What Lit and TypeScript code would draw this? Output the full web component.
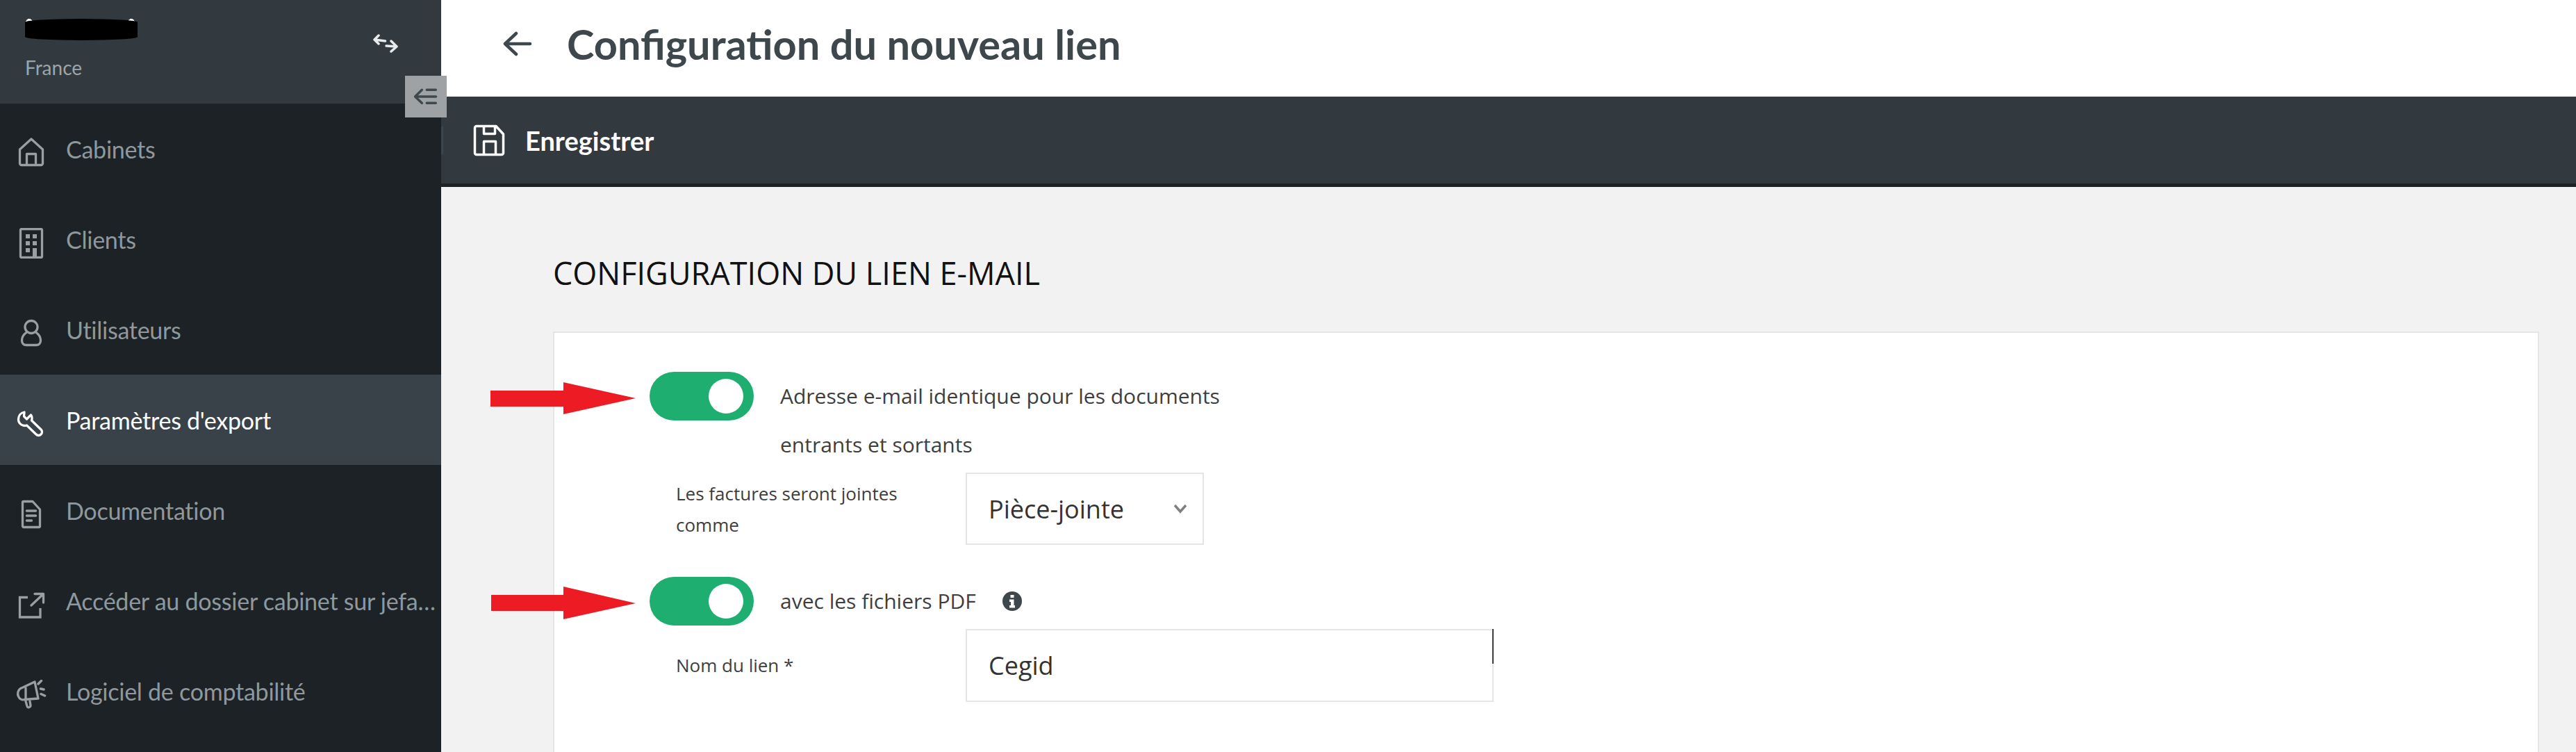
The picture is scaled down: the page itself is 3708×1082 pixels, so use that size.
import { LitElement, html, css, svg } from "lit";
import { customElement } from "lit/decorators.js";

const ic = (p: unknown) => html`<svg viewBox="0 0 44 44" fill="none" stroke="currentColor" stroke-width="3.300" stroke-linecap="round" stroke-linejoin="round">${p}</svg>`;

const NAV = [
  { label: "Cabinets", icon: ic(svg`<path d="M5.500 17 22 2 38.500 17V37a2.500 2.500 0 0 1-2.500 2.500H8A2.500 2.500 0 0 1 5.500 37Z"/><path d="M15.500 39V23.500h13V39"/>`) },
  { label: "Clients", icon: ic(svg`<rect x="6.500" y="1.500" width="31" height="41" rx="1.500"/><g fill="currentColor" stroke="none"><rect x="14" y="9" width="6" height="6"/><rect x="24" y="9" width="6" height="6"/><rect x="14" y="19" width="6" height="6"/><rect x="24" y="19" width="6" height="6"/><rect x="14" y="29" width="6" height="6"/><rect x="24" y="29" width="6" height="15"/></g>`) },
  { label: "Utilisateurs", icon: ic(svg`<circle cx="22" cy="12.500" r="9"/><path d="M15.500 20C11 23 8.500 27 8.500 32c0 4 2.500 6.500 6.500 6.500h14c4 0 6.500-2.500 6.500-6.500 0-5-2.500-9-7-12"/>`) },
  { label: "Paramètres d'export", active: true, icon: ic(svg`<path d="M12 5C6.500 6 3.500 10.500 3.500 15.500c0 6 6 10.500 12 8.500L29 37c2 2 5 2 7 0s2-5 0-7L22.500 17c1-3 .5-6-1-8l-6 6-4-4 .5-6Z"/>`) },
  { label: "Documentation", icon: ic(svg`<path d="M11 3.500H24L34.500 15V39a1.500 1.500 0 0 1-1.500 1.500H11A1.500 1.500 0 0 1 9.500 39V5A1.500 1.500 0 0 1 11 3.500Z"/><path stroke-width="3.500" d="M15.500 17h13M15.500 24h13M15.500 31h7"/>`) },
  { label: "Accéder au dossier cabinet sur jefacture.com", icon: ic(svg`<path stroke-linecap="butt" stroke-linejoin="miter" d="M17 11.500H5.500V40H35V27"/><path d="M22 23 39 7M27 6.500H39.500V19"/>`) },
  { label: "Logiciel de comptabilité", icon: ic(svg`<path d="M27 3 9 11.500C3 13 1.500 20 3.500 24c1.500 4 5.500 5.500 8.500 4.500L32 27Z"/><path d="M14 12v16M14 31l2 7c1 3 5 2 5-1l-1-6"/><path stroke-width="3.500" d="M32 6l4.500-4.500M35.500 13l4.500 1M36 20.500l5.500 2.500"/>`) },
];

@customElement("app-root")
export class AppRoot extends LitElement {
  static styles = css`
    :host { display: block; width: 3708px; height: 1082px; overflow: hidden; position: relative; font-family: "Lato", "Noto Sans", sans-serif; }
    .page { display: flex; height: 1082px; }
    .side { width: 635px; flex: none; background: #1c2226; display: flex; flex-direction: column; }
    .acct { height: 149px; flex: none; background: #323a40; box-sizing: border-box; padding: 26px 36px 0; display: flex; justify-content: space-between; }
    .acct-name { display: flex; flex-direction: column; }
    .ink { width: 162px; height: 32px; background:
      radial-gradient(circle 5px at 6px 6px, #fff 98%, transparent),
      radial-gradient(circle 5px at 153px 6px, #fff 98%, transparent); }
    .redact { width: 162px; height: 31px; margin-top: 1px; background: #000; border-radius: 50% / 5px; }
    .country { font-size: 28px; line-height: 36px; margin-top: 21px; color: #9ca5aa; }
    .swap { width: 36px; height: 28px; margin: 23px 26px 0 0; color: #e8eaeb; }
    .swap svg { display: block; width: 100%; height: 100%; }
    .nav { flex: none; }
    .item { height: 130px; display: flex; align-items: center; padding-left: 23px; color: #8e989d; font-size: 34px; letter-spacing: -0.25px; }
    .item.active { background: #3a4249; color: #fff; }
    .ico { width: 44px; height: 44px; flex: none; margin: 12px 28px 0 0; color: #9a9fa2; }
    .active .ico { color: #fff; }
    .ico svg { display: block; width: 100%; height: 100%; }
    .label { width: 540px; white-space: nowrap; overflow: hidden; text-overflow: ellipsis; }
    .main { flex: 1; min-width: 0; display: flex; flex-direction: column; background: #f2f2f2; overflow: hidden; }
    .top { height: 139px; flex: none; background: #fff; display: flex; align-items: center; padding: 0 0 14px 90px; box-sizing: border-box; }
    .back { width: 40px; height: 34px; color: #3d474c; margin-right: 51px; }
    .back svg { display: block; width: 100%; height: 100%; overflow: visible; }
    h1 { margin: 0; font-size: 59.500px; font-weight: 700; color: #3d474c; }
    .bar { height: 130px; flex: none; box-sizing: border-box; background: #32393f; border-bottom: 5px solid #1c2226; display: flex; align-items: center; padding-left: 46px; color: #fff; font-size: 38px; font-weight: 700; }
    .save { width: 46px; height: 46px; margin-right: 29px; }
    .save svg { display: block; width: 100%; height: 100%; }
    .content { flex: none; padding: 92px 53px 0 161px; }
    h2 { margin: 0; font-family: "Open Sans", sans-serif; font-size: 45px; font-weight: 400; line-height: 64px; color: #111; }
    .card { margin-top: 52px; background: #fff; border: 2px solid #e5e5e5; height: 700px; padding: 56px 0 0 137px; box-sizing: border-box; font-family: "Open Sans", sans-serif; color: #3e3e3e; }
    .trow { display: flex; align-items: flex-start; font-size: 30px; line-height: 70px; }
    .trow.second { margin-top: 46px; }
    .switch { width: 150px; height: 70px; flex: none; background: #1eaf70; border-radius: 35px; display: flex; justify-content: flex-end; align-items: center; padding-right: 15px; box-sizing: border-box; margin-right: 38px; }
    .knob { width: 50px; height: 50px; border-radius: 50%; background: #fff; }
    .ttext { width: 680px; }
    .frow { display: flex; margin: 5px 0 0 38px; }
    .flabel { width: 417px; flex: none; box-sizing: border-box; padding: 8px 60px 0 0; font-size: 26px; line-height: 45px; }
    .flabel.mid { align-self: center; padding-top: 0; }
    .select { width: 343px; height: 104px; box-sizing: border-box; border: 2px solid #e5e5e5; display: flex; align-items: center; justify-content: space-between; padding: 0 22px 0 31px; font-size: 36px; color: #333; }
    .chev { width: 20px; height: 14px; color: #808080; }
    .input { width: 760px; height: 105px; box-sizing: border-box; border: 2px solid #e5e5e5; display: flex; align-items: center; padding-left: 31px; font-size: 36px; color: #333; position: relative; }
    .caret { position: absolute; right: -2px; top: -2px; width: 2px; height: 50px; background: #3c3c3c; }
    .info { width: 28px; height: 28px; margin-left: 38px; align-self: center; color: #3d474c; }
    .collapse { position: absolute; left: 583px; top: 109px; width: 60px; height: 60px; background: #9ea2a5; display: flex; align-items: center; justify-content: center; color: #3f484d; }
    .collapse svg { width: 34px; height: 26px; }
    .sliver { position: absolute; left: 635px; top: 182px; width: 3px; height: 40px; background: #3a4550; }
    .arrow { position: absolute; left: 706px; width: 210px; height: 48px; }
    .a1 { top: 550px; }
    .a2 { top: 844px; }
  `;

  render() {
    return html`
      <div class="page">
        <aside class="side">
          <div class="acct">
            <div class="acct-name"><div class="ink"><div class="redact"></div></div><div class="country">France</div></div>
            <div class="swap"><svg viewBox="0 0 36 28" fill="none" stroke="currentColor" stroke-width="3.500" stroke-linecap="round" stroke-linejoin="round"><path d="M2 8l15.500 2M8 2 2 8l6 6M34 18l-15-1M26 10l8 8-8 7" /></svg></div>
          </div>
          <nav class="nav">
            ${NAV.map((n) => html`<div class="item ${n.active ? "active" : ""}"><span class="ico">${n.icon}</span><span class="label">${n.label}</span></div>`)}
          </nav>
        </aside>
        <main class="main">
          <header class="top">
            <span class="back"><svg viewBox="0 0 40 34" fill="none" stroke="currentColor" stroke-width="4.500" stroke-linecap="round" stroke-linejoin="round"><path d="M38 17H2M18 2 2 17l16 15"/></svg></span>
            <h1>Configuration du nouveau lien</h1>
          </header>
          <div class="bar">
            <span class="save"><svg viewBox="0 0 46 46" fill="none" stroke="currentColor" stroke-width="3.500" stroke-linejoin="round"><path d="M5 2.500H33L43.500 14V41a2.500 2.500 0 0 1-2.500 2.500H5A2.500 2.500 0 0 1 2.500 41V5A2.500 2.500 0 0 1 5 2.500Z"/><path d="M15.500 3v10.500h16V3M15.500 43V24.500h17V43"/></svg></span>
            Enregistrer
          </div>
          <div class="content">
            <h2>CONFIGURATION DU LIEN E-MAIL</h2>
            <section class="card">
              <div class="trow"><span class="switch"><span class="knob"></span></span><span class="ttext">Adresse e-mail identique pour les documents entrants et sortants</span></div>
              <div class="frow">
                <div class="flabel">Les factures seront jointes comme</div>
                <div class="select">Pièce-jointe<svg class="chev" viewBox="0 0 20 14" fill="none" stroke="currentColor" stroke-width="3.500"><path d="M2 2l8 9 8-9"/></svg></div>
              </div>
              <div class="trow second"><span class="switch"><span class="knob"></span></span><span>avec les fichiers PDF</span>
                <svg class="info" viewBox="0 0 28 28"><circle cx="14" cy="14" r="14" fill="currentColor"/><path fill="#fff" d="M11.500 5h5v4h-5ZM10 11.500h6.500V20H18v3.500h-8V20h2v-5h-2Z"/></svg></div>
              <div class="frow">
                <div class="flabel mid">Nom du lien *</div>
                <div class="input">Cegid<span class="caret"></span></div>
              </div>
            </section>
          </div>
        </main>
      </div>
      <div class="sliver"></div>
      <div class="collapse"><svg viewBox="0 0 34 26" fill="none" stroke="currentColor" stroke-width="3.500" stroke-linecap="round" stroke-linejoin="round"><path d="M11.300 3.300 1.500 13l9.800 9.300M2 13h29.500M18.300 3.300h13M18.300 22.300h13"/></svg></div>
      <svg class="arrow a1" viewBox="0 0 210 48"><path fill="#ed1c24" d="M0 12h105V0l104 23L105 46V35H0Z"/></svg>
      <svg class="arrow a2" viewBox="0 0 210 48"><path fill="#ed1c24" d="M1 12h104V0l104 24L105 47V35H1Z"/></svg>
    `;
  }
}
